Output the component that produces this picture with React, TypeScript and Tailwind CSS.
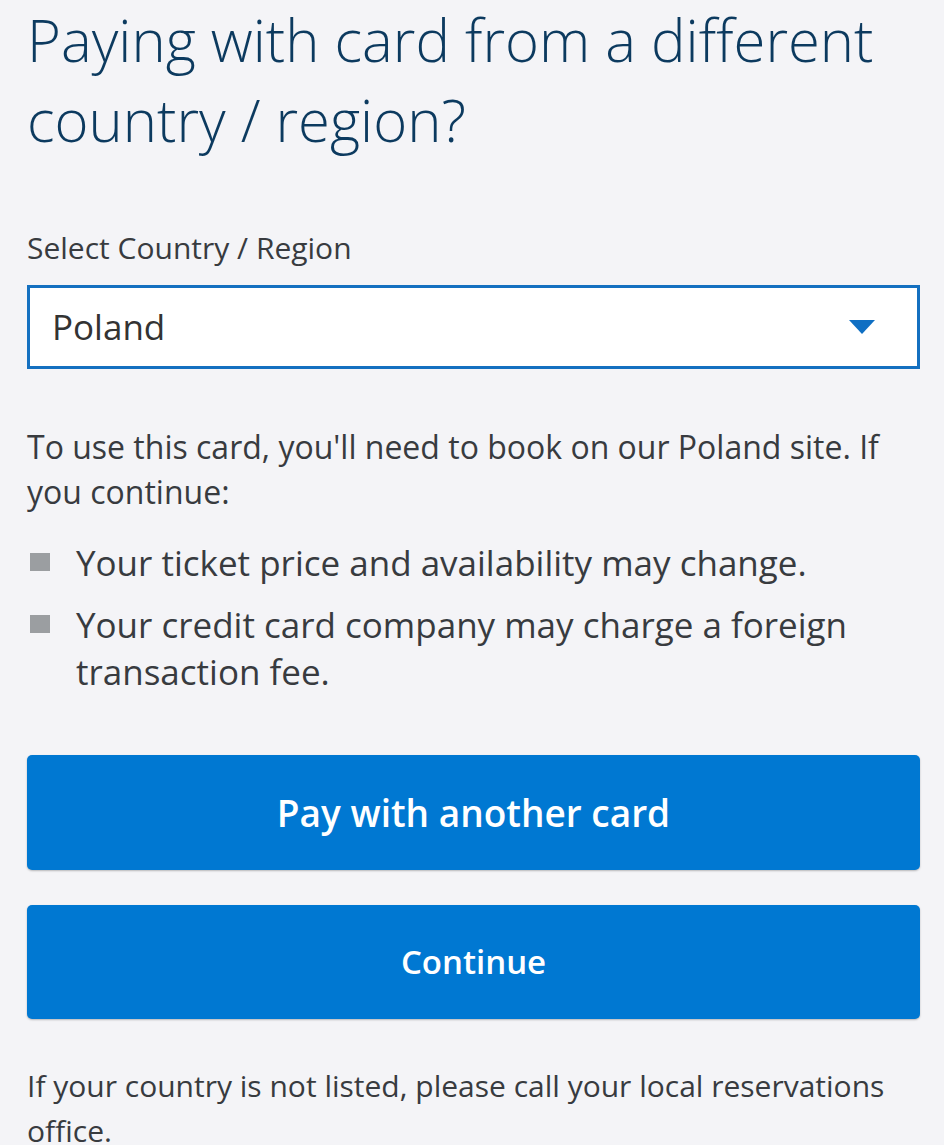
const bullets = [
  "Your ticket price and availability may change.",
  "Your credit card company may charge a foreign transaction fee.",
];

export default function App() {
  return (
    <div className="min-h-[1145px] w-full bg-[#f4f4f7] pl-[27px] pr-[24px] font-['Open_Sans','Noto_Sans',sans-serif] text-[#383b3f]">
      <h1 className="text-[58px] leading-[80px] font-light text-[#0c3a5f]">
        Paying with card from a different country / region?
      </h1>

      <div className="mt-[68px] text-[30px] leading-[40px]">Select Country / Region</div>

      <div className="mt-[17px] flex h-[84px] items-center justify-between border-[3px] border-[#1470c0] bg-white pl-[22px] pr-[42px]">
        <span className="text-[35px] leading-[44px] text-[#333]">Poland</span>
        <svg width="26" height="14" viewBox="0 0 26 14">
          <polygon points="0,0 26,0 13,14" fill="#0f6fc3" />
        </svg>
      </div>

      <p className="mt-[55px] text-[32px] leading-[45px]">
        To use this card, you'll need to book on our Poland site. If you continue:
      </p>

      <ul className="mt-[25px] flex flex-col gap-[15px] text-[35px] leading-[47px]">
        {bullets.map((b) => (
          <li key={b} className="flex gap-[26px]">
            <span className="ml-[3px] mt-[14px] h-[18px] w-[20px] shrink-0 bg-[#9b9ea1]" />
            <span>{b}</span>
          </li>
        ))}
      </ul>

      <div className="mt-[60px] flex flex-col gap-[35px]">
        <button className="h-[115px] w-full rounded-[5px] bg-[#0078d2] text-[37px] font-semibold text-white shadow-[0_1px_2px_rgba(0,0,0,0.25)]">
          Pay with another card
        </button>
        <button className="h-[114px] w-full rounded-[5px] bg-[#0078d2] text-[33px] font-semibold text-white shadow-[0_1px_2px_rgba(0,0,0,0.25)]">
          Continue
        </button>
      </div>

      <p className="mt-[44px] text-[30px] leading-[45px]">
        If your country is not listed, please call your local reservations office.
      </p>
    </div>
  );
}
